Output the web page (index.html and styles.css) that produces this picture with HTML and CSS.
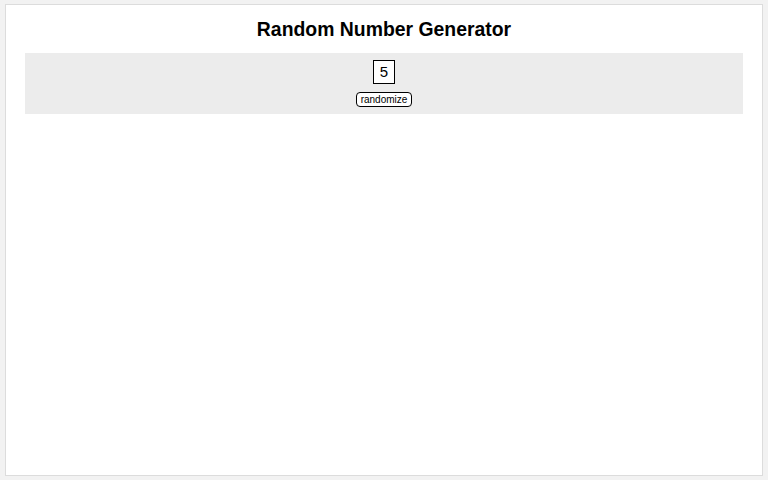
FILE: index.html
```html
<!DOCTYPE html>
<html>
<head>
<meta charset="utf-8">
<link rel="stylesheet" href="styles.css">
</head>
<body>
<div class="panel">
  <h1 class="title">Random Number Generator</h1>
  <div class="box">
    <div class="number">5</div>
    <button class="btn">randomize</button>
  </div>
</div>
</body>
</html>
```
FILE: styles.css
```css
html, body {
  margin: 0;
  height: 100%;
}
body {
  background: #f2f2f2;
  padding: 4px 5px 4px 5px;
  box-sizing: border-box;
  font-family: "Liberation Sans", Arial, sans-serif;
}
.panel {
  background: #fff;
  border: 1px solid #dcdcdc;
  height: 100%;
  box-sizing: border-box;
  padding: 0 19px;
}
.title {
  margin: 0;
  padding-top: 13px;
  height: 35px;
  font-size: 19.4px;
  font-weight: bold;
  text-align: center;
  color: #000;
  line-height: 22px;
}
.box {
  background: #ececec;
  height: 61px;
  box-sizing: border-box;
  padding-top: 7px;
  display: flex;
  flex-direction: column;
  align-items: center;
}
.number {
  width: 22px;
  height: 24px;
  box-sizing: border-box;
  border: 1px solid #000;
  background: #fff;
  font-size: 15px;
  line-height: 22px;
  text-align: center;
}
.btn {
  margin-top: 8px;
  font-family: "Liberation Sans", Arial, sans-serif;
  font-size: 10px;
  line-height: 11px;
  padding: 1px 4px;
  border: 1px solid #000;
  border-radius: 4px;
  background: #fff;
  color: #000;
}
```
